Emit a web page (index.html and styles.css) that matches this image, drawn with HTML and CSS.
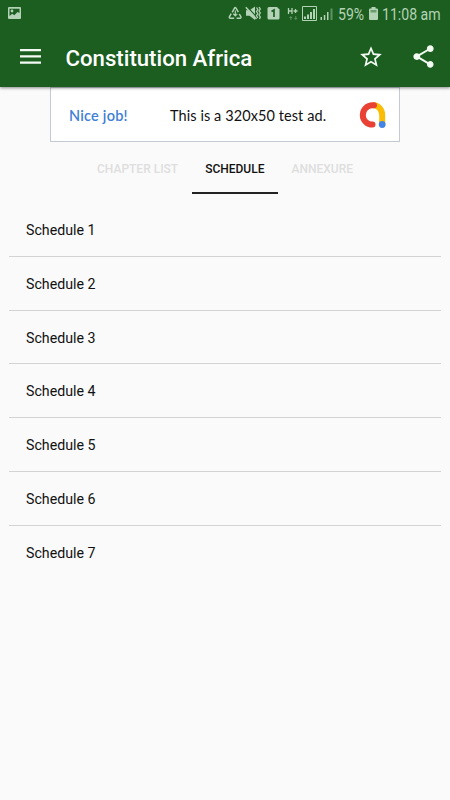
FILE: index.html
```html
<!DOCTYPE html>
<html lang="en">
<head>
  <meta charset="UTF-8" />
  <meta name="viewport" content="width=device-width, initial-scale=1.0"/>
  <title>Constitution Africa</title>
  <link rel="stylesheet" href="styles.css">
</head>
<body>
  <header>
    <div class="status-bar">
      <svg class="status-picture" width="13" height="12" viewBox="0 0 13 12">
        <path fill-rule="evenodd" d="M1 0h11q1 0 1 1v10q0 1-1 1H1q-1 0-1-1V1q0-1 1-1zM1.500 1.700V9l2.800-2.200 2 1.500L9.500 5l2 1V1.700z"/>
        <circle cx="4" cy="4" r="1.400"/>
      </svg>
      <svg class="status-icons" width="108" height="20" viewBox="0 0 108 20">
        <!-- recycle -->
        <g fill="none" stroke="#b4d2b5" stroke-width="1.500">
          <path d="M4.200 9.300 6.500 5.200Q7.200 4 8 5.200l2.300 4M11.300 11l1.500 2.600q.6 1.600-1 1.600H8.600M6.200 15.200H2.500q-1.700 0-1-1.600l1.700-3"/>
          <path d="M7.300 7.500v5M5.200 10.800l2.100 2 2-2" stroke-width="1.200"/>
        </g>
        <!-- sound off -->
        <path d="M18 7.200h3.500L27 3.500v13.500l-5.500-4.200H18z"/>
        <path d="M18.800 3.500 29.500 15" stroke="#1b5e20" stroke-width="1.300"/>
        <path d="m17.800 4.300 10.700 11.700" stroke="#b4d2b5" stroke-width="1.500"/>
        <path d="m28.500 4.500 1.300 2-1.300 2 1.300 2-1.300 2 1.300 2.500M31 4l1.300 2L31 8l1.300 2L31 12l1.300 2-.8 2" fill="none" stroke="#b4d2b5" stroke-width="1.300"/>
        <!-- sim card -->
        <path d="M41 4h8l2.500 2.500V15q0 1.500-1.500 1.500h-9q-1.500 0-1.500-1.500V5.500Q39.500 4 41 4z"/>
        <path d="M43.500 8.500 46 7v7" fill="none" stroke="#1b5e20" stroke-width="1.700"/>
        <!-- network type -->
        <path d="M60.500 5v6M64 5v6M60.500 8H64M65.500 8h4M67.500 6v4" fill="none" stroke="#b4d2b5" stroke-width="1.300"/>
        <path class="dim" d="m61 15 1.800-2 1.800 2h-1.200v2h-1v-2zM66 15h1.300v-2h1v2h1.300l-1.800 2z"/>
        <!-- signal -->
        <path d="M74.500 3.500h14v14h-14z" fill="none" stroke="#b4d2b5"/>
        <path d="M76 13.500h2V16h-2zM79 11.500h2V16h-2zM82 9h2v7h-2zM85 6h2v10h-2z"/>
        <path d="M92.500 14H94v3h-1.500zM95.800 12h1.500v5h-1.500zM99 9h1.500v8H99z"/>
        <path class="dim" d="M102.500 5.500h2V17h-2z"/>
      </svg>
      <span class="battery-level">59%</span>
      <svg class="battery" width="9" height="13" viewBox="0 0 9 13">
        <path d="M2.500 0h4v1.500H8q1 0 1 1V12q0 1-1 1H1q-1 0-1-1V2.500q0-1 1-1h1.500z"/>
        <path class="battery-empty" d="M1.500 3h6v2.500h-6z"/>
      </svg>
      <span class="clock">11:08 am</span>
    </div>
    <div class="toolbar">
      <svg class="menu" width="21" height="15" viewBox="0 0 21 15">
        <path d="M0 0h21v2.300H0zM0 6.200h21v2.300H0zM0 12.400h21v2.300H0z"/>
      </svg>
      <h1>Constitution Africa</h1>
      <svg class="star" width="26" height="26" viewBox="0 0 24 24">
        <path d="M22 9.240l-7.190-.62L12 2 9.190 8.630 2 9.240l5.460 4.730L5.820 21 12 17.270 18.180 21l-1.630-7.030L22 9.240zM12 15.400l-3.760 2.270 1-4.280-3.320-2.880 4.380-.38L12 6.100l1.710 4.040 4.380.38-3.320 2.880 1 4.280L12 15.400z"/>
      </svg>
      <svg class="share" width="27" height="27" viewBox="0 0 24 24">
        <path d="M18 16.080c-.76 0-1.440.3-1.960.77L8.910 12.700c.05-.23.09-.46.09-.7s-.04-.47-.09-.7l7.050-4.110c.54.5 1.250.81 2.040.81 1.660 0 3-1.340 3-3s-1.340-3-3-3-3 1.340-3 3c0 .24.040.47.090.7L8.040 9.810C7.500 9.310 6.790 9 6 9c-1.660 0-3 1.340-3 3s1.340 3 3 3c.79 0 1.500-.31 2.040-.81l7.120 4.160c-.05.21-.08.43-.08.65 0 1.610 1.310 2.920 2.920 2.920s2.920-1.310 2.920-2.920-1.310-2.920-2.920-2.920z"/>
      </svg>
    </div>
  </header>
  <div class="ad">
    <span class="ad-praise">Nice job!</span>
    <span class="ad-text">This is a 320x50 test ad.</span>
    <svg class="ad-logo" width="28" height="28" viewBox="0 0 28 28" fill="none" stroke-width="6" stroke-linecap="round">
      <path d="M14.500 4.200A9 9.700 0 0 1 23.200 14v9" stroke="#fbbc04"/>
      <path d="M15 4.200h-1.500a9.700 9.700 0 0 0 0 19.400" stroke="#e94235"/>
      <circle cx="23.200" cy="23.500" r="3.400" fill="#4285e4"/>
    </svg>
  </div>
  <nav>
    <a class="tab">CHAPTER LIST</a>
    <a class="tab active">SCHEDULE</a>
    <a class="tab">ANNEXURE</a>
  </nav>
  <ul class="schedules">
    <li>Schedule 1</li>
    <li>Schedule 2</li>
    <li>Schedule 3</li>
    <li>Schedule 4</li>
    <li>Schedule 5</li>
    <li>Schedule 6</li>
    <li>Schedule 7</li>
  </ul>
</body>
</html>
```

FILE: styles.css
```css
body {
  margin: 0;
  height: 800px;
  overflow: hidden;
  background: #fafafa;
  color: #111;
  font-family: Roboto, sans-serif;
}
svg {
  display: block;
  flex: none;
}
header {
  position: relative;
  height: 87px;
  background: #1b5e20;
  box-shadow: 0 1px 3px rgba(0, 0, 0, 0.45);
}
.status-bar {
  display: flex;
  align-items: center;
  height: 28px;
  padding-left: 8px;
  color: #b4d2b5;
  fill: #b4d2b5;
  font-size: 16px;
  white-space: nowrap;
}
.status-picture {
  margin-right: 207px;
  margin-bottom: 2px;
}
.status-icons { margin-bottom: 2px; }
.status-icons .dim { opacity: 0.45; }
.battery-level, .clock {
  transform: scaleX(0.88);
  transform-origin: left;
}
.battery-level {
  width: 27px;
  margin-left: 2px;
}
.battery { margin: 0 4px 1px 4px; }
.battery-empty { fill: #6c9b6f; }

.toolbar {
  display: flex;
  align-items: center;
  height: 57px;
  padding-left: 20px;
  fill: #f3faf3;
}
.toolbar h1 {
  width: 292px;
  margin: 2px 0 0 24.500px;
  color: #fff;
  font-size: 22.200px;
  font-weight: 500;
  line-height: 30px;
  white-space: nowrap;
}
.toolbar .share { margin-left: 26.500px; }

.ad {
  display: flex;
  align-items: center;
  box-sizing: border-box;
  width: 350px;
  height: 55px;
  margin: 0 auto;
  padding-left: 18px;
  padding-top: 1px;
  background: #fff;
  border: 1px solid #c5c9d2;
  color: #111;
  font-family: Lato, sans-serif;
  font-size: 14.500px;
  letter-spacing: 0.080px;
  white-space: nowrap;
}
.ad-praise {
  width: 101px;
  color: #3f7fd6;
  font-weight: 600;
  letter-spacing: 0.220px;
}
.ad-text { width: 189px; }

nav {
  display: flex;
  justify-content: center;
  height: 52px;
}
.tab {
  box-sizing: border-box;
  padding: 0 13.500px;
  color: #dedede;
  font-size: 12px;
  font-weight: 500;
  line-height: 54px;
}
.tab.active {
  color: #111;
  border-bottom: 2px solid #222;
}

.schedules {
  margin: 9px 9px 0;
  padding: 0;
  list-style: none;
}
.schedules li {
  box-sizing: border-box;
  height: 53.750px;
  padding-left: 17px;
  border-bottom: 1px solid #d3d3d3;
  font-size: 14.200px;
  line-height: 54px;
}
.schedules li:last-child { border-bottom: none; }
```
